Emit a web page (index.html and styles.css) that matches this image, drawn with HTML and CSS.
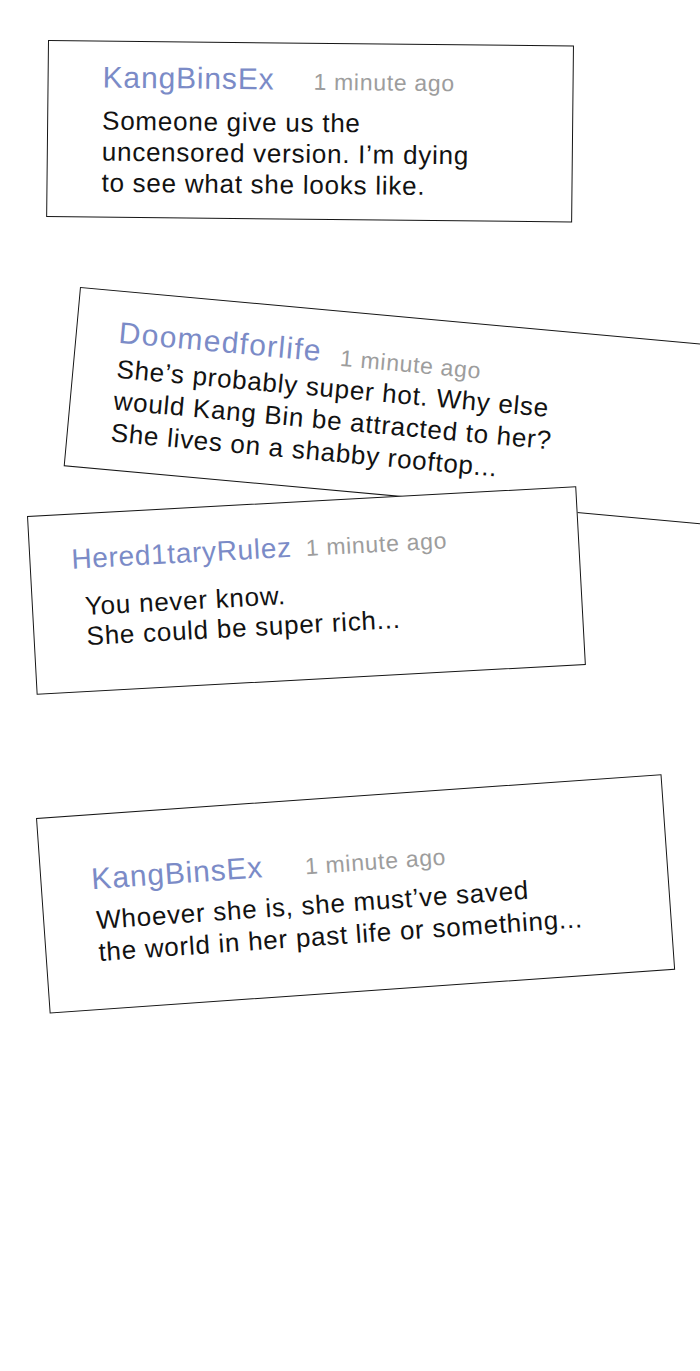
FILE: index.html
```html
<!DOCTYPE html>
<html lang="en">
<head>
<meta charset="utf-8">
<title>Comments</title>
<link rel="stylesheet" href="styles.css">
</head>
<body>
<main class="panel">
  <section class="card card-1">
    <div class="head"><span class="name">KangBinsEx</span><span class="time">1 minute ago</span></div>
    <p class="text">Someone give us the<br>uncensored version. I’m dying<br>to see what she looks like.</p>
  </section>
  <section class="card card-2">
    <div class="head"><span class="name">Doomedforlife</span><span class="time">1 minute ago</span></div>
    <p class="text">She’s probably super hot. Why else<br>would Kang Bin be attracted to her?<br>She lives on a shabby rooftop...</p>
  </section>
  <section class="card card-3">
    <div class="head"><span class="name">Hered1taryRulez</span><span class="time">1 minute ago</span></div>
    <p class="text">You never know.<br>She could be super rich...</p>
  </section>
  <section class="card card-4">
    <div class="head"><span class="name">KangBinsEx</span><span class="time">1 minute ago</span></div>
    <p class="text">Whoever she is, she must’ve saved<br>the world in her past life or something...</p>
  </section>
</main>
</body>
</html>
```
FILE: styles.css
```css
html, body {
  margin: 0;
  padding: 0;
  background: #ffffff;
}

.panel {
  width: 700px;
  height: 1371px;
  overflow: hidden;
  display: flex;
  flex-direction: column;
  align-items: flex-start;
  background: #ffffff;
  font-family: "Liberation Sans", Arial, Helvetica, sans-serif;
}

.card {
  box-sizing: border-box;
  flex: none;
  background: #ffffff;
  border: 1.8px solid #161616;
  transform-origin: 0 0;
  white-space: nowrap;
}

.head {
  line-height: 34px;
  height: 34px;
}

.name {
  font-size: 30px;
  letter-spacing: 0.85px;
  color: #7b8bc7;
}

.time {
  font-size: 23px;
  letter-spacing: 0.7px;
  color: #9d9d9d;
}

.text {
  margin: 0;
  font-size: 26px;
  letter-spacing: 0.75px;
  color: #121212;
}

/* card 1 */
.card-1 {
  width: 526px;
  height: 177px;
  margin: 40px 0 0 48px;
  padding: 19px 0 0 54px;
  transform: rotate(0.6deg);
}
.card-1 .time { margin-left: 39px; }
.card-1 .text { margin-top: 11px; line-height: 31px; }

/* card 2 */
.card-2 {
  width: 680px;
  height: 180px;
  margin: 70px 0 0 80px;
  padding: 24px 0 0 42px;
  transform: rotate(5.2deg);
}
.card-2 .name { letter-spacing: 1.3px; }
.card-2 .time { margin-left: 19px; vertical-align: -3px; }
.card-2 .text { margin-top: 3px; line-height: 32px; padding-left: 1px; }

/* card 3 */
.card-3 {
  width: 550px;
  height: 179px;
  margin: 49px 0 0 27px;
  padding: 28px 0 0 41px;
  transform: rotate(-3.1deg);
}
.card-3 .name { font-size: 28px; letter-spacing: 0.7px; }
.card-3 .time { margin-left: 14px; }
.card-3 .text { margin-top: 15px; line-height: 30px; padding-left: 11px; }

/* card 4 */
.card-4 {
  width: 627px;
  height: 196px;
  margin: 123px 0 0 36px;
  padding: 47px 0 0 50px;
  transform: rotate(-4deg);
}
.card-4 .time { margin-left: 42px; }
.card-4 .text { margin-top: 8px; line-height: 32px; padding-left: 2px; }
```
